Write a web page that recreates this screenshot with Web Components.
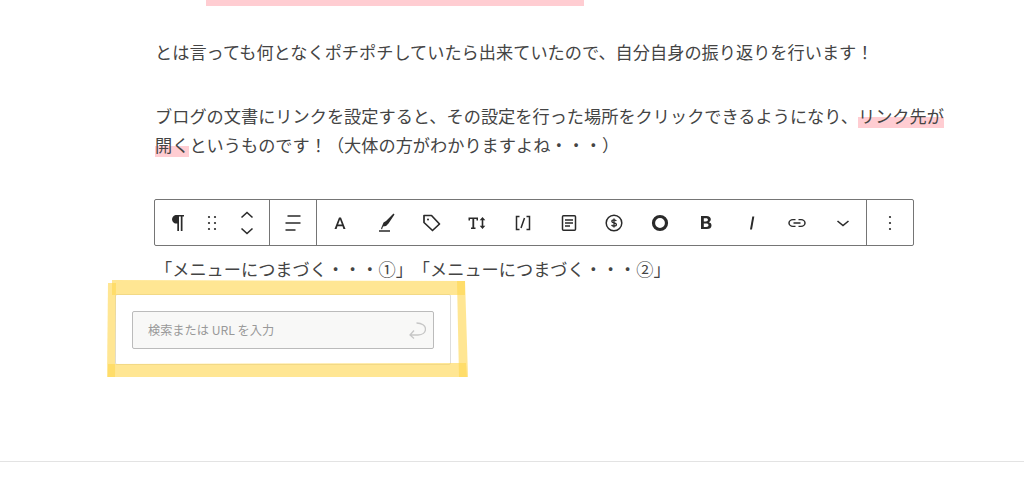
<!DOCTYPE html>
<html lang="ja">
<head>
<meta charset="utf-8">
<title>ブログの振り返り</title>
<style>
  html, body { margin: 0; padding: 0; background: #fff; }
  body { height: 485px; overflow: hidden; font-family: "Noto Sans CJK JP", "Liberation Sans", sans-serif; color: #444; text-spacing-trim: space-all; }
</style>
</head>
<body>
<blog-post>
  <post-para>とは言っても何となくポチポチしていたら出来ていたので、自分自身の振り返りを行います！</post-para>
  <post-para>ブログの文書にリンクを設定すると、その設定を行った場所をクリックできるようになり、<mark-line>リンク先が</mark-line><mark-line>開く</mark-line>というものです！（大体の方がわかりますよね・・・）</post-para>
  <block-toolbar></block-toolbar>
  <post-para class="links">「メニューにつまづく・・・①」「メニューにつまづく・・・②」</post-para>
  <link-popover></link-popover>
</blog-post>
<page-rule></page-rule>

<script>
class BlogPost extends HTMLElement {
  constructor() {
    super();
    this.attachShadow({ mode: 'open' }).innerHTML = `
    <style>
      :host { display: block; height: 461px; box-sizing: border-box; padding-left: 155px; }
      .top-mark { width: 378px; height: 6px; margin-left: 51px; margin-bottom: 31px; background: #ffcdd2; }
      .body { width: 795px; display: flex; flex-direction: column; }
    </style>
    <div class="top-mark"></div>
    <div class="body"><slot></slot></div>
    `;
  }
}

class PostPara extends HTMLElement {
  constructor() {
    super();
    this.attachShadow({ mode: 'open' }).innerHTML = `
    <style>
      :host { display: block; font-size: 17.2px; line-height: 29px; margin-bottom: 35px; }
      :host(.links) { margin-bottom: 0; }
    </style>
    <slot></slot>
    `;
  }
}

class MarkLine extends HTMLElement {
  constructor() {
    super();
    // no whitespace round the slot, this host is inline
    this.attachShadow({ mode: 'open' }).innerHTML = `<style>
      :host { display: inline; background: linear-gradient(transparent 56%, #ffcdd2 56%, #ffcdd2 100%); }
    </style><slot></slot>`;
  }
}

const ICONS = [
  '<path d="M10.500 4h8.500v1.600h-1.500V20h-1.700V5.600h-1.800V20h-1.700v-7.500A4.300 4.300 0 0 1 10.500 4z" fill="currentColor"/>',
  '<g fill="currentColor"><circle cx="9" cy="6" r="1.100"/><circle cx="15" cy="6" r="1.100"/><circle cx="9" cy="12" r="1.100"/><circle cx="15" cy="12" r="1.100"/><circle cx="9" cy="18" r="1.100"/><circle cx="15" cy="18" r="1.100"/></g>',
  '<path d="M6.500 6.500 12 1.500l5.500 5M6.500 17.500l5.500 5 5.500-5" fill="none" stroke="currentColor" stroke-width="1.600"/>',
  '<path d="M6.500 5h13M4.500 12h15M4.500 19h10" fill="none" stroke="currentColor" stroke-width="1.600"/>',
  '<path d="M6.500 18 11 6.500h2L17.500 18h-2.100l-.9-2.800h-5L8.600 18zm3.600-4.500h3.800L12 8.600z" fill="currentColor"/>',
  '<path d="M19.500 2.500 20.500 3.500 14.500 12.500 12 15 9 15.500 8 18.500 7 17.500 8.500 14 9.500 11.500 12 10zM5 19.300h11v1.500H5z" fill="currentColor"/>',
  '<path d="M5 4.500h7.500l8 8.500-7 6.500L5 11.500z" fill="none" stroke="currentColor" stroke-width="1.700" stroke-linejoin="round"/><circle cx="9" cy="8.500" r="1" fill="currentColor"/>',
  '<path d="M3.500 6.500h9.500v3h-1.500V8.100H9.200v8.300h1.300V18H6v-1.600h1.400V8.100H5v1.400H3.500zM17.500 6l2.800 3.200h-2v5.600h2L17.500 18l-2.800-3.200h2V9.200h-2z" fill="currentColor"/>',
  '<path d="M8.500 5.500H5.500v13h3M15.500 5.500h3v13h-3M10 17l3.500-10" fill="none" stroke="currentColor" stroke-width="1.500"/>',
  '<path d="M6.500 4.700h11a1 1 0 0 1 1 1v12.600a1 1 0 0 1-1 1h-11a1 1 0 0 1-1-1V5.700a1 1 0 0 1 1-1z" fill="none" stroke="currentColor" stroke-width="1.500"/><path d="M8 9h8M8 12h8M8 15h5" fill="none" stroke="currentColor" stroke-width="1.500"/>',
  '<circle cx="12" cy="12" r="7.800" fill="none" stroke="currentColor" stroke-width="1.500"/><path d="M14.300 10c-.4-.8-1.200-1.200-2.300-1.200-1.300 0-2.200.6-2.200 1.500 0 2.300 4.600.9 4.600 3.200 0 1-.9 1.600-2.400 1.600-1.100 0-2-.4-2.400-1.200M12 7.500v9" fill="none" stroke="currentColor" stroke-width="1.300"/>',
  '<circle cx="12" cy="12" r="6.500" fill="none" stroke="currentColor" stroke-width="3.200"/>',
  '<path d="M7 5h5.500c2.800 0 4.300 1.300 4.300 3.300 0 1.500-.8 2.500-2 2.900 1.700.4 2.700 1.500 2.700 3.200 0 2.300-1.700 3.600-4.600 3.600H7zm2.800 2.300v3.100h2.100c1.300 0 2-.6 2-1.600s-.7-1.500-2-1.500zm0 5.300v3.400h2.400c1.500 0 2.300-.6 2.300-1.700s-.8-1.700-2.300-1.700z" fill="currentColor"/>',
  '<path d="M12.300 5.500h2l-2.300 13h-2z" fill="currentColor"/>',
  '<path d="M10.500 8H8a4 4 0 0 0 0 8h2.500M13.500 8H16a4 4 0 0 1 0 8h-2.500M8.500 12h7" fill="none" stroke="currentColor" stroke-width="1.500" transform="translate(12 12) scale(1 .85) translate(-12 -12)"/>',
  '<path d="m6.500 10 5.500 4.500 5.500-4.500" fill="none" stroke="currentColor" stroke-width="1.600"/>',
  '<g fill="currentColor"><circle cx="12" cy="6" r="1.100"/><circle cx="12" cy="12" r="1.100"/><circle cx="12" cy="18" r="1.100"/></g>',
];

class BlockToolbar extends HTMLElement {
  constructor() {
    super();
    const btn = (i) => `<span class="btn"><svg width="24" height="24" viewBox="0 0 24 24">${ICONS[i]}</svg></span>`;
    const group = (cls, from, to) => {
      let out = '';
      for (let i = from; i <= to; i++) out += btn(i);
      return `<div class="group ${cls}">${out}</div>`;
    };
    this.attachShadow({ mode: 'open' }).innerHTML = `
    <style>
      :host { display: block; margin-top: 5px; margin-bottom: 8px; }
      .bar {
        width: 760px;
        height: 47px;
        margin-left: -1px;
        box-sizing: border-box;
        display: flex;
        background: #fff;
        border: 1px solid #757575;
        border-radius: 2px;
        color: #2a2a2a;
      }
      .group { display: flex; flex: none; box-sizing: border-box; align-items: center; border-right: 1px solid #757575; }
      .group:last-child { border-right: 0; }
      .g1 { width: 115px; padding-left: 4px; }
      .g1 .btn { width: 35px; }
      .g2 { width: 47px; }
      .g3 { flex: 1; min-width: 0; }
      .g3 .btn { flex: 1; width: 0; }
      .g4 { width: 46px; }
      .btn { width: 46px; height: 45px; display: flex; align-items: center; justify-content: center; }
      svg { display: block; filter: blur(.3px); }
    </style>
    <div class="bar">
      ${group('g1', 0, 2)}
      ${group('g2', 3, 3)}
      ${group('g3', 4, 15)}
      ${group('g4', 16, 16)}
    </div>
    `;
  }
}

class LinkPopover extends HTMLElement {
  constructor() {
    super();
    this.attachShadow({ mode: 'open' }).innerHTML = `
    <style>
      :host { display: block; position: relative; width: 336px; height: 71px; margin-left: -40px; margin-top: 11px; }
      .card {
        box-sizing: border-box;
        width: 100%;
        height: 100%;
        padding: 16px 16px 0 16px;
        background: #fff;
        border: 1px solid #ddd;
        border-radius: 2px;
      }
      .field {
        box-sizing: border-box;
        width: 302px;
        height: 38px;
        display: flex;
        align-items: center;
        justify-content: space-between;
        padding: 0 7px 0 15px;
        background: #f8f8f7;
        border: 1px solid #bbb;
        border-radius: 2px;
        font-size: 12.2px;
        color: #999;
      }
      .field svg { display: block; }
      .hl { position: absolute; left: -15px; top: -20px; width: 368px; height: 110px; pointer-events: none; }
      .hl polygon { fill: rgb(255, 214, 80); fill-opacity: .62; }
    </style>
    <div class="card">
      <div class="field">
        <span>検索または URL を入力</span>
        <svg width="20" height="20" viewBox="0 0 20 20"><path d="M10.500 3C16 3 19.500 5.500 19.500 9C19.500 12.500 16.500 15 12 15H4M8 10.500 4 15l4 3.500" fill="none" stroke="#c6c6c6" stroke-width="1.300"/></svg>
      </div>
    </div>
    <svg class="hl" viewBox="100 274 368 110">
      <polygon points="112,280 465,281 465,295 112,295"/>
      <polygon points="108,283 116,283 115,377 107,377"/>
      <polygon points="108,364 466,363 467,377 108,377"/>
      <polygon points="457,281 465,281 468,377 459,377"/>
    </svg>
    `;
  }
}

class PageRule extends HTMLElement {
  constructor() {
    super();
    this.attachShadow({ mode: 'open' }).innerHTML = `
    <style>
      :host { display: block; height: 24px; border-top: 1px solid #e3e3e3; box-sizing: border-box; }
    </style>
    `;
  }
}

customElements.define('blog-post', BlogPost);
customElements.define('post-para', PostPara);
customElements.define('mark-line', MarkLine);
customElements.define('block-toolbar', BlockToolbar);
customElements.define('link-popover', LinkPopover);
customElements.define('page-rule', PageRule);
</script>
</body>
</html>
